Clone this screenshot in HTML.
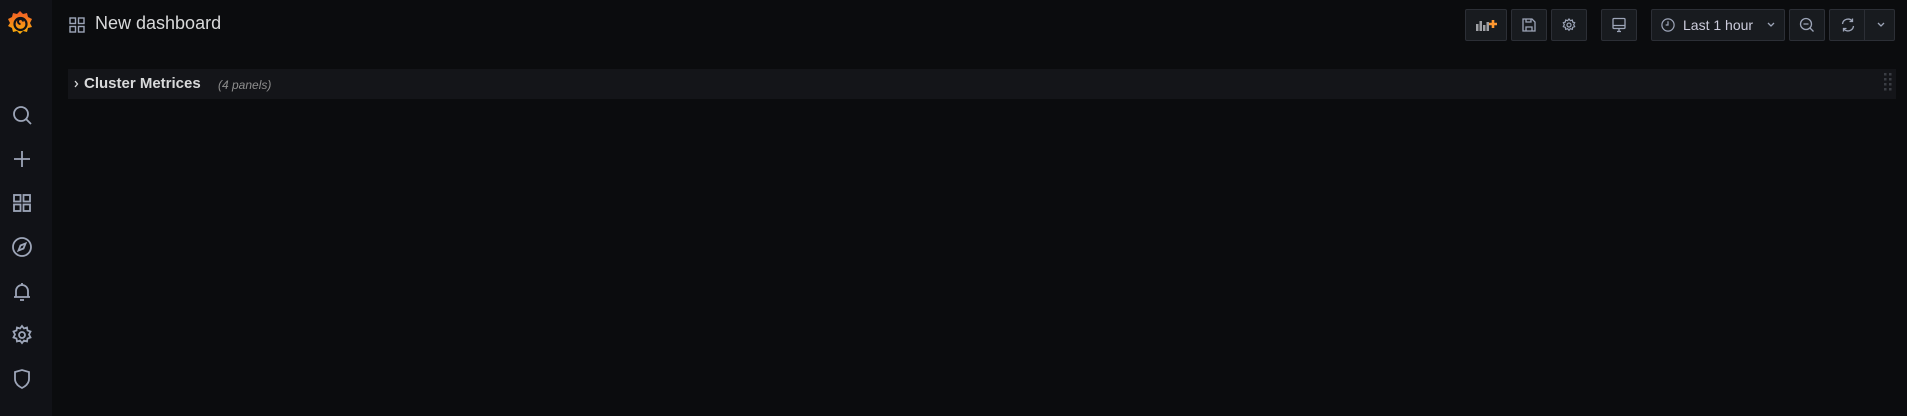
<!DOCTYPE html>
<html><head><style>
*{box-sizing:border-box;margin:0;padding:0}
body{width:1907px;height:416px;background:#0b0c0e;font-family:"Liberation Sans",sans-serif;color:#d8d9da;position:relative;overflow:hidden}
.side{position:absolute;left:0;top:0;width:52px;height:416px;background:#111217}
.ic{position:absolute;left:10px;width:24px;height:24px}
.btn{position:absolute;top:9px;height:32px;background:#181b1f;border:1px solid #2c2f36;border-radius:2px}
.btn svg{position:absolute;left:50%;top:50%;transform:translate(-50%,-50%)}
</style></head><body>
<div class="side">
<svg style="position:absolute;left:6px;top:9px" width="29" height="30" viewBox="0 0 29 30">
<defs><linearGradient id="g" x1="0" y1="1" x2="0" y2="0"><stop offset="0" stop-color="#fbb10a"/><stop offset="1" stop-color="#f05a28"/></linearGradient></defs>
<path fill="url(#g)" d="M14 2l3 3 4-1 1 4 4 2-2 4 2 4-4 1-1 4-4-1-3 3-3-3-4 1-1-4-4-2 2-3-2-4 4-2 1-4 4 1z"/>
<circle cx="14.5" cy="15" r="6" fill="none" stroke="#111217" stroke-width="2.2"/>
<path d="M14.5 15a2.5 2.5 0 1 1 2.5-2.5" fill="none" stroke="#111217" stroke-width="2"/>
</svg>
<svg class="ic" style="top:103px" viewBox="0 0 24 24" fill="none" stroke="#9da5b8" stroke-width="1.8"><circle cx="11" cy="11" r="7"/><path d="M16 16l5 5"/></svg>
<svg class="ic" style="top:147px" viewBox="0 0 24 24" fill="none" stroke="#9da5b8" stroke-width="1.8"><path d="M12 4v16M4 12h16"/></svg>
<svg class="ic" style="top:191px" viewBox="0 0 24 24" fill="none" stroke="#9da5b8" stroke-width="1.8"><rect x="4" y="4" width="6.5" height="6.5"/><rect x="13.5" y="4" width="6.5" height="6.5"/><rect x="4" y="13.5" width="6.5" height="6.5"/><rect x="13.5" y="13.5" width="6.5" height="6.5"/></svg>
<svg class="ic" style="top:235px" viewBox="0 0 24 24" fill="none" stroke="#9da5b8" stroke-width="1.8"><circle cx="12" cy="12" r="9"/><path d="M15.5 8.5l-2 5-5 2 2-5z"/></svg>
<svg class="ic" style="top:280px" viewBox="0 0 24 24" fill="none" stroke="#9da5b8" stroke-width="1.8"><path d="M6 17V11a6 6 0 0 1 12 0v6H6zM4 17h16M10 20h4M12 3v2"/></svg>
<svg class="ic" style="top:323px" viewBox="0 0 24 24" fill="none" stroke="#9da5b8" stroke-width="1.8"><circle cx="12" cy="12" r="3"/><path d="M12 3l2 2.5 3-1 .5 3 3 1-1.5 3 1.5 3-3 1-.5 3-3-1-2 2.5-2-2.5-3 1-.5-3-3-1 1.5-3-1.5-3 3-1 .5-3 3 1z"/></svg>
<svg class="ic" style="top:367px" viewBox="0 0 24 24" fill="none" stroke="#9da5b8" stroke-width="1.8"><path d="M5 5l7-2 7 2v7c0 4-3 7-7 9-4-2-7-5-7-9z"/></svg>
</div>
<svg style="position:absolute;left:69px;top:17px" width="16" height="16" viewBox="0 0 16 16" fill="none" stroke="#9da5b8" stroke-width="1.4"><rect x="1" y="1" width="5.5" height="5.5"/><rect x="9.5" y="1" width="5.5" height="5.5"/><rect x="1" y="9.5" width="5.5" height="5.5"/><rect x="9.5" y="9.5" width="5.5" height="5.5"/></svg>
<div style="position:absolute;left:95px;top:13px;font-size:18px;color:#d8d9da">New dashboard</div>

<div class="btn" style="left:1465px;width:42px"><svg width="22" height="16" viewBox="0 0 22 16"><rect x="1" y="7" width="2.5" height="7" fill="#9fa1a6"/><rect x="4.5" y="4" width="2.5" height="10" fill="#9fa1a6"/><rect x="8" y="8" width="2.5" height="6" fill="#9fa1a6"/><rect x="11.5" y="5" width="2.5" height="9" fill="#9fa1a6"/><path d="M18 3v8M14 7h8" stroke="#ff9830" stroke-width="2.6"/></svg></div>
<div class="btn" style="left:1511px;width:36px"><svg width="16" height="16" viewBox="0 0 16 16" fill="none" stroke="#9da5b8" stroke-width="1.3"><path d="M2 2h9l3 3v9H2z"/><path d="M5 2v3h5V2M5 14v-4h6v4"/></svg></div>
<div class="btn" style="left:1551px;width:36px"><svg width="16" height="16" viewBox="0 0 24 24" fill="none" stroke="#9da5b8" stroke-width="1.8"><circle cx="12" cy="12" r="3"/><path d="M12 3l2 2.5 3-1 .5 3 3 1-1.5 3 1.5 3-3 1-.5 3-3-1-2 2.5-2-2.5-3 1-.5-3-3-1 1.5-3-1.5-3 3-1 .5-3 3 1z"/></svg></div>
<div class="btn" style="left:1601px;width:36px"><svg width="16" height="16" viewBox="0 0 16 16" fill="none" stroke="#9da5b8" stroke-width="1.3"><rect x="2" y="1.5" width="12" height="10" rx="1"/><path d="M2 8.5h12M6 14.5h4M8 11.5v3"/></svg></div>
<div class="btn" style="left:1651px;width:134px"><svg style="left:16px" width="15" height="15" viewBox="0 0 16 16" fill="none" stroke="#9da5b8" stroke-width="1.3"><circle cx="8" cy="8" r="6.5"/><path d="M8 4v4H5.5"/></svg><span style="position:absolute;left:31px;top:7px;font-size:14px;color:#ccccdc">Last 1 hour</span><svg style="left:119px" width="10" height="8" viewBox="0 0 10 8" fill="none" stroke="#9da5b8" stroke-width="1.3"><path d="M2 2l3 3 3-3"/></svg></div>
<div class="btn" style="left:1789px;width:36px"><svg width="16" height="16" viewBox="0 0 16 16" fill="none" stroke="#9da5b8" stroke-width="1.3"><circle cx="7" cy="7" r="5.5"/><path d="M11 11l3.5 3.5M4.5 7h5"/></svg></div>
<div class="btn" style="left:1829px;width:66px"><svg style="left:18px" width="16" height="16" viewBox="0 0 16 16" fill="none" stroke="#9da5b8" stroke-width="1.3"><path d="M2.5 7A5.5 5.5 0 0 1 12.5 4.5M13.5 9A5.5 5.5 0 0 1 3.5 11.5M12.5 1.5v3h-3M3.5 14.5v-3h3"/></svg><div style="position:absolute;left:34px;top:0;width:1px;height:30px;background:#2c2f36"></div><svg style="left:51px" width="10" height="8" viewBox="0 0 10 8" fill="none" stroke="#9da5b8" stroke-width="1.3"><path d="M2 2l3 3 3-3"/></svg></div>

<div style="position:absolute;left:68px;top:69px;width:1828px;height:30px;background:#141519"></div>
<svg style="position:absolute;left:74px;top:80px" width="5" height="8" viewBox="0 0 5 8" fill="none" stroke="#d8d9da" stroke-width="1.3"><path d="M1 1l2.5 3L1 7"/></svg>
<div style="position:absolute;left:84px;top:75px;font-size:15px;font-weight:bold;color:#d8d9da">Cluster Metrices</div>
<div style="position:absolute;left:218px;top:78px;font-size:12px;font-style:italic;color:#8e8e8e">(4 panels)</div>
<svg style="position:absolute;left:1884px;top:73px" width="8" height="20" viewBox="0 0 8 20" fill="#3a3d44"><rect x="0" y="0" width="2.5" height="2.5"/><rect x="5" y="0" width="2.5" height="2.5"/><rect x="0" y="5" width="2.5" height="2.5"/><rect x="5" y="5" width="2.5" height="2.5"/><rect x="0" y="10" width="2.5" height="2.5"/><rect x="5" y="10" width="2.5" height="2.5"/><rect x="0" y="15" width="2.5" height="2.5"/><rect x="5" y="15" width="2.5" height="2.5"/></svg>
</body></html>
